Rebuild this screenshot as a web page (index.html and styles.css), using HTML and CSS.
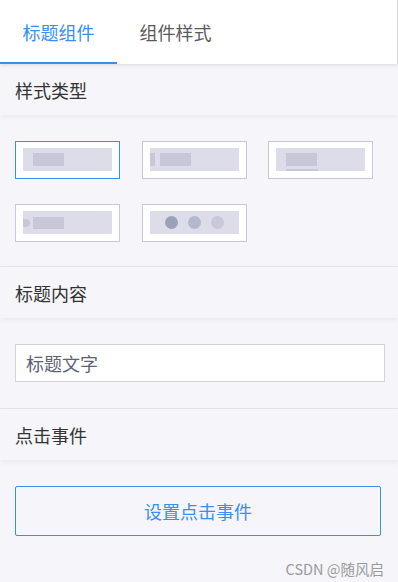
FILE: index.html
```html
<!DOCTYPE html>
<html lang="zh-CN">
<head>
<meta charset="utf-8">
<title>标题组件</title>
<link rel="stylesheet" href="styles.css">
</head>
<body>
<div class="tabs">
  <div class="tab active">标题组件</div>
  <div class="tab">组件样式</div>
</div>

<section class="section">
  <div class="sec-head">样式类型</div>
  <div class="sec-body styles-grid">
    <div class="opt selected">
      <div class="pv"><span class="blk"></span></div>
    </div>
    <div class="opt">
      <div class="pv pv-bar"><span class="bar"></span><span class="blk"></span></div>
    </div>
    <div class="opt">
      <div class="pv"><span class="blk blk-ul"></span></div>
    </div>
    <div class="opt">
      <div class="pv pv-dot"><span class="dot"></span><span class="blk"></span></div>
    </div>
    <div class="opt">
      <div class="pv pv-dots"><span class="d d1"></span><span class="d d2"></span><span class="d d3"></span></div>
    </div>
  </div>
</section>

<section class="section">
  <div class="sec-head">标题内容</div>
  <div class="sec-body body-input">
    <div class="input">标题文字</div>
  </div>
</section>

<section class="section last">
  <div class="sec-head">点击事件</div>
  <div class="sec-body">
    <div class="btn">设置点击事件</div>
  </div>
</section>

<div class="watermark">CSDN @随风启</div>
</body>
</html>
```

FILE: styles.css
```css
* { box-sizing: border-box; }
html, body {
  margin: 0;
  padding: 0;
}
body {
  width: 398px;
  height: 582px;
  overflow: hidden;
  background: #f5f5fa;
  font-family: "Noto Sans CJK SC", "Noto Sans", sans-serif;
  color: #333;
}
.tabs {
  display: flex;
  height: 64px;
  background: #fff;
  border-right: 1px solid #d4d4d8;
  box-shadow: 0 1px 4px rgba(0, 0, 0, 0.12);
  position: relative;
  z-index: 3;
}
.tab {
  width: 117px;
  display: flex;
  align-items: center;
  justify-content: center;
  font-size: 18px;
  color: #5a5a5a;
  border-bottom: 2px solid transparent;
  padding-top: 2px;
}
.tab.active {
  color: #3a8ef0;
  border-bottom-color: #3a8ef0;
}
.section {
  border-bottom: 1px solid #e4e4ec;
}
.section.last { border-bottom: none; }
.sec-head {
  height: 51px;
  display: flex;
  align-items: center;
  padding-left: 15px;
  font-size: 18px;
  color: #333;
  background: #f5f5fa;
  box-shadow: 0 2px 5px rgba(0, 0, 0, 0.05);
  position: relative;
  z-index: 2;
}
.sec-body {
  padding: 26px 15px 26px 15px;
}
.body-input { padding-right: 13px; }
.styles-grid {
  display: grid;
  grid-template-columns: 105px 105px 105px;
  column-gap: 21.5px;
  row-gap: 25px;
  padding-bottom: 24px;
}
.opt {
  height: 38px;
  background: #fff;
  border: 1px solid #c8c8d8;
  padding: 6px 7px 7px 7px;
}
.opt.selected { border-color: #3a8ef0; }
.pv {
  height: 23px;
  background: #dddde9;
  display: flex;
  align-items: flex-start;
  padding: 5px 0 0 10px;
  position: relative;
}
.blk {
  display: block;
  width: 31px;
  height: 13px;
  background: #c7c7d7;
}
.blk-ul {
  position: relative;
}
.blk-ul::after {
  content: "";
  position: absolute;
  left: 0;
  top: 16px;
  width: 32px;
  height: 2px;
  background: #c7c7d7;
}
.pv-bar { padding-left: 0; }
.pv-bar .bar {
  display: block;
  width: 5px;
  height: 13px;
  background: #c7c7d7;
  margin-right: 5px;
}
.pv-dot { padding-left: 0; padding-top: 6px; }
.pv-dot .blk { height: 12px; }
.pv-dot .dot {
  display: block;
  width: 7px;
  height: 8px;
  margin-top: 2px;
  margin-right: 3px;
  border-radius: 0 4px 4px 0;
  background: #c7c7d7;
}
.pv-dots {
  padding: 0;
  align-items: center;
  justify-content: center;
  gap: 10px;
}
.d {
  display: block;
  width: 13px;
  height: 13px;
  border-radius: 50%;
}
.d1 { background: #9ba1b8; }
.d2 { background: #b4b8cc; }
.d3 { background: #c7c8d9; }
.input {
  height: 38px;
  background: #fff;
  border: 1px solid #d2d2da;
  display: flex;
  align-items: center;
  padding-left: 10px;
  font-size: 18px;
  color: #5c6474;
}
.btn {
  width: 366px;
  height: 50px;
  border: 1px solid #3a8ef0;
  border-radius: 2px;
  display: flex;
  align-items: center;
  justify-content: center;
  font-size: 18px;
  color: #3a8ef0;
  background: #f5f5fa;
}
.watermark {
  text-align: right;
  padding-right: 14px;
  margin-top: -4px;
  font-size: 14.5px;
  color: #9a9a9a;
  font-family: "Noto Sans CJK SC", "Noto Sans", sans-serif;
}
```
